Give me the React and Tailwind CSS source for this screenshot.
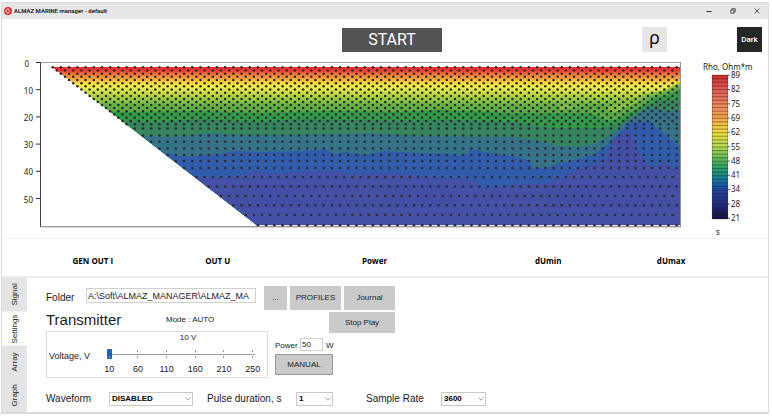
import { useState } from "react";

const LATTICE = 4.105;

// depth rows of the section: y position and index of the first measured point
const ROWS = [
  [67.3, 0], [70.5, 1], [73.7, 2], [76.8, 3], [80, 4], [83.2, 5], [86.3, 6], [89.5, 7],
  [92.8, 8], [96, 9], [99, 10], [102, 11], [105, 12], [108, 13], [111.3, 14], [114.5, 15],
  [117.8, 16], [121, 17], [124.3, 18], [128.5, 20], [135.5, 22], [141.7, 24], [148.5, 26],
  [155, 28], [161, 30], [168, 32], [177, 35], [186.5, 38], [196, 41], [205.3, 44],
  [215, 47], [225.3, 50],
];

const POINTS = ROWS.flatMap(([y, start]) => {
  const row = [];
  for (let n = start; n <= 152; n += 2) row.push([52.7 + n * LATTICE, y]);
  return row;
});

const LAYERS = [
  {
    fill: "#339a48",
    top: "40,112 100,111 130,112 200,111 260,113 330,111 400,112 440,110 512,113 590,113 598,116 608,121 618,119 628,113 640,107 655,98 668,95 680,89",
  },
  {
    fill: "#36855e",
    top: "40,121 100,121 160,122 200,119 256,122 300,119 400,121 450,120 512,122 545,127 560,128 600,128 620,123 635,113 650,104 665,100 680,101",
  },
  {
    fill: "#35738a",
    top: "40,135 140,135 165,137 185,136 200,134 215,133 240,135 270,135 330,134 370,133 400,135 430,136 512,137 530,139 548,143 556,146 580,146 595,144 605,138 615,131 625,123 640,113 652,108 666,111 680,110",
  },
  {
    fill: "#315bab",
    top: "40,153 165,153 180,156 190,157 200,155 215,155 235,151 260,152 300,151 323,150 325,148 329,152 335,154 345,152 365,155 385,151 420,153 453,154 454,156 468,154 470,149 485,152 512,156 525,159 530,162 533,168 545,168 560,163 580,159 596,153 606,146 615,137 625,127 633,122 650,121 655,127 665,134 680,147",
  },
  {
    fill: "#4350a5",
    top: "40,177 205,178 230,178 245,174 256,171 270,174 300,172 335,171 350,174 380,174 400,174 440,178 475,180 480,188 505,187 520,184 545,184 560,178 580,169 600,162 608,155 613,140 620,136 630,130 636,142 640,154 648,164 655,167 665,162 672,168 680,170",
  },
];

const DEPTH_TICKS = [
  [0, 62.5], [10, 89.7], [20, 116.9], [30, 144.1], [40, 171.3], [50, 198.5],
];

const RHO_TICKS = [89, 82, 75, 69, 62, 55, 48, 41, 34, 28, 21];

const VOLTAGE_TICKS = [10, 60, 110, 160, 210, 250];

const TABS = ["Signal", "Settings", "Array", "Graph"];

const grayButton = "bg-[#cacaca] text-[8px] text-[#222] flex items-center justify-center";

function TitleBar() {
  return (
    <header className="flex h-4 items-center gap-[2px] bg-[#e7e7e7] pr-2 pl-[2px]">
      <svg className="h-2 w-2" viewBox="0 0 8 8" aria-hidden="true">
        <circle cx="4" cy="4" r="3.9" fill="#e3202c" />
        <path d="M5.4 2.4A2.1 2.1 0 1 0 5.4 5.6" fill="none" stroke="#fff" strokeWidth="0.9" />
        <path d="M3.8 4h2.6" stroke="#fff" strokeWidth="0.7" />
      </svg>
      <h1 className="flex-1 font-[Roboto,sans-serif] text-[6px] leading-none font-medium text-black">
        ALMAZ MARINE manager - default
      </h1>
      <div className="flex items-center gap-[18px] text-[#333]">
        <button aria-label="Minimize">
          <svg className="h-[6px] w-[6px]" viewBox="0 0 6 6">
            <path d="M0.5 3.5h5" stroke="currentColor" />
          </svg>
        </button>
        <button aria-label="Restore">
          <svg className="h-[6px] w-[6px]" viewBox="0 0 6 6" fill="none" stroke="currentColor" strokeWidth="0.8">
            <path d="M0.8 1.9h3.2v3.3h-3.2zM1.9 1.9v-1.2h3.3v3.3h-1.2" />
          </svg>
        </button>
        <button aria-label="Close">
          <svg className="h-[6px] w-[6px]" viewBox="0 0 6 6">
            <path d="M0.6 0.6l4.8 4.8M5.4 0.6l-4.8 4.8" stroke="currentColor" strokeWidth="0.8" />
          </svg>
        </button>
      </div>
    </header>
  );
}

function Toolbar() {
  return (
    <div className="flex items-start pt-2 pr-[6px] pb-1">
      <div className="flex-[17]" />
      <button className="mt-px h-6 w-[100px] bg-[#525353] font-[Roboto,sans-serif] text-[16px] leading-6 text-white">
        START
      </button>
      <div className="flex-[10]" />
      <button className="h-[25px] w-[25px] bg-[#e6e6e6] pb-[5px] font-['Open_Sans',sans-serif] text-[18px] leading-5 text-black">
        ρ
      </button>
      <button className="ml-[70px] h-[25px] w-[25px] bg-[#262626] font-[Roboto,sans-serif] text-[8px] font-medium text-white">
        Dark
      </button>
    </div>
  );
}

function Section() {
  return (
    <svg className="min-w-0 flex-1" viewBox="2 56 688 182" role="img" aria-label="Resistivity section">
      <defs>
        <linearGradient id="section-fill" gradientUnits="userSpaceOnUse" x1="0" y1="67" x2="0" y2="113">
          <stop offset="0" stopColor="#ee2a2e" />
          <stop offset="0.08" stopColor="#f03a30" />
          <stop offset="0.14" stopColor="#f36c37" />
          <stop offset="0.22" stopColor="#f7943b" />
          <stop offset="0.3" stopColor="#fcc03d" />
          <stop offset="0.37" stopColor="#f8e63f" />
          <stop offset="0.45" stopColor="#e9ec49" />
          <stop offset="0.55" stopColor="#cfe045" />
          <stop offset="0.64" stopColor="#abd03f" />
          <stop offset="0.74" stopColor="#8ac540" />
          <stop offset="0.82" stopColor="#67b445" />
          <stop offset="1" stopColor="#57a947" />
        </linearGradient>
        <clipPath id="section-clip">
          <path d="M52 67H680V226H258z" />
        </clipPath>
      </defs>
      <g clipPath="url(#section-clip)">
        <rect x="50" y="67" width="630" height="160" fill="url(#section-fill)" />
        <path d="M560,104L600,110L620,103L645,94L665,90L680,82V120H560z" fill="#84c241" />
        <path d="M560,110L598,104L604,107L612,113L630,106L650,96L665,92L680,86V126H560z" fill="#5bab46" />
        {LAYERS.map((layer) => (
          <polygon key={layer.fill} points={`${layer.top} 680,228 40,228`} fill={layer.fill} />
        ))}
        <path d="M255 225.5H680" stroke="#e4e4f4" />
      </g>
      <path d="M40 62.5H680.5" stroke="#9aa3ad" />
      <path d="M680.5 62V227" stroke="#8e9297" />
      <path d="M40.5 62V227" stroke="#444" />
      <path d="M40 226.8H681" stroke="#7b7672" />
      {POINTS.map(([x, y]) => (
        <circle key={`${x}-${y}`} cx={x} cy={y} r="1.3" fill="#2c2a30" />
      ))}
      <g className="font-['Noto_Sans',sans-serif] text-[8px]" fill="#222" textAnchor="end">
        {DEPTH_TICKS.map(([depth, y]) => (
          <g key={depth}>
            <path d={`M36 ${y}H40`} stroke="#333" />
            <text x={depth === 0 ? 29 : 33} y={y + 4}>
              {depth}
            </text>
          </g>
        ))}
      </g>
    </svg>
  );
}

function Legend() {
  return (
    <svg className="w-[78px] shrink-0" viewBox="690 56 78 182" role="img" aria-label="Resistivity scale">
      <defs>
        <linearGradient id="rho-scale" x1="0" y1="0" x2="0" y2="1">
          <stop offset="0" stopColor="#cf2b2c" />
          <stop offset="0.1" stopColor="#e35a54" />
          <stop offset="0.2" stopColor="#ef835c" />
          <stop offset="0.3" stopColor="#f4a648" />
          <stop offset="0.4" stopColor="#f2de40" />
          <stop offset="0.5" stopColor="#b3d94f" />
          <stop offset="0.6" stopColor="#4db457" />
          <stop offset="0.69" stopColor="#168c80" />
          <stop offset="0.75" stopColor="#1268a8" />
          <stop offset="0.8" stopColor="#1f43a0" />
          <stop offset="0.9" stopColor="#232a80" />
          <stop offset="1" stopColor="#131140" />
        </linearGradient>
      </defs>
      <rect x="712" y="75" width="16" height="144" fill="url(#rho-scale)" />
      {Array.from({ length: 41 }, (_, i) => (
        <path key={i} d={`M712 ${75.2 + i * 3.59}H728`} stroke="#1c1c1c" strokeOpacity="0.6" strokeWidth="0.7" />
      ))}
      <path d="M712.3 75V219M727.7 75V219" stroke="#333" strokeOpacity="0.6" strokeWidth="0.6" />
      <g className="font-['Noto_Sans',sans-serif] text-[8px]" fill="#222">
        <text x="703" y="70">
          Rho, Ohm*m
        </text>
        {RHO_TICKS.map((value, i) => (
          <g key={value}>
            <path d={`M728 ${75.2 + i * 14.3}h2`} stroke="#444" strokeWidth="0.8" />
            <text x="731" y={78 + i * 14.3}>
              {value}
            </text>
          </g>
        ))}
        <text x="716" y="235">
          s
        </text>
      </g>
    </svg>
  );
}

function Readings() {
  return (
    <div className="grid h-[38px] grid-cols-[124fr_126fr_188fr_160fr_86fr] items-center border-t border-[#f4f4f4] pt-[6px] pr-[54px] pl-[29px] text-center font-['Open_Sans',sans-serif] text-[8px] font-bold text-black">
      <span>GEN OUT I</span>
      <span>OUT U</span>
      <span>Power</span>
      <span>dUmin</span>
      <span>dUmax</span>
    </div>
  );
}

function Select({ id, options, className }) {
  return (
    <div className={`relative ${className}`}>
      <select
        id={id}
        className="block h-[14px] w-full appearance-none border border-[#c9c9c9] bg-white pl-[2px] text-[8px] leading-3 font-bold text-black"
      >
        {options.map((option) => (
          <option key={option}>{option}</option>
        ))}
      </select>
      <svg
        className="pointer-events-none absolute top-[5px] right-[2px] h-[4px] w-[6px]"
        viewBox="0 0 6 4"
        fill="none"
        stroke="#888"
        strokeWidth="0.8"
      >
        <path d="M0.4 0.6L3 3.2L5.6 0.6" />
      </svg>
    </div>
  );
}

function TickRow() {
  return (
    <div className="grid grid-cols-6 justify-items-center">
      {VOLTAGE_TICKS.map((value) => (
        <span key={value} className="h-[2px] w-px bg-[#999]" />
      ))}
    </div>
  );
}

function VoltageBox() {
  const [voltage, setVoltage] = useState(10);

  return (
    <div className="flex h-[47px] border border-[#dcdcdc]">
      <label htmlFor="voltage" className="w-12 shrink-0 pt-[18px] pl-[2px] text-[9px] leading-3 whitespace-nowrap">
        Voltage, V
      </label>
      <div className="flex-1">
        <output htmlFor="voltage" className="block pl-[14px] text-center text-[8px] leading-3">
          {voltage} V
        </output>
        <div className="pt-[6px]">
          <TickRow />
          <input
            id="voltage"
            type="range"
            min="10"
            max="250"
            value={voltage}
            onChange={(e) => setVoltage(Number(e.target.value))}
            className="mx-auto -my-[3px] block h-[10px] w-[148px] appearance-none bg-[linear-gradient(#9a9a9a,#9a9a9a)] bg-[length:100%_1px] bg-center bg-no-repeat [&::-webkit-slider-thumb]:h-[10px] [&::-webkit-slider-thumb]:w-[5px] [&::-webkit-slider-thumb]:appearance-none [&::-webkit-slider-thumb]:rounded-[1px] [&::-webkit-slider-thumb]:bg-[#1f62b4]"
          />
          <TickRow />
        </div>
        <div className="grid grid-cols-6 pt-[5px] text-center text-[9px] leading-3">
          {VOLTAGE_TICKS.map((value) => (
            <span key={value}>{value}</span>
          ))}
        </div>
      </div>
    </div>
  );
}

function SettingsPanel() {
  return (
    <div className="flex-1 pt-2 pb-[6px] pl-[19px]">
      <div className="flex h-6">
        <label htmlFor="folder" className="w-10 pt-[6px] text-[10px] leading-3">
          Folder
        </label>
        <input
          id="folder"
          defaultValue="A:\Soft\ALMAZ_MANAGER\ALMAZ_MA"
          className="mt-[2px] h-[15px] w-[170px] border border-[#d0d0d0] px-px text-[9px] leading-3"
        />
        <button className={`${grayButton} ml-2 w-[23px]`}>...</button>
        <button className={`${grayButton} ml-[3px] w-[51px]`}>PROFILES</button>
        <button className={`${grayButton} ml-[3px] w-[51px]`}>Journal</button>
      </div>

      <div className="mt-[2px] flex gap-[7px]">
        <div className="w-[222px]">
          <div className="flex h-[19px] items-center">
            <h2 className="w-[120px] pb-[4px] text-[15px] leading-4">Transmitter</h2>
            <span className="pb-[4px] text-[8px] leading-4">Mode : AUTO</span>
          </div>
          <VoltageBox />
        </div>
        <div className="flex w-[120px] flex-col">
          <button className={`${grayButton} h-[21px] w-[66px] self-end`}>Stop Play</button>
          <div className="mt-[5px] flex h-[13px] items-end text-[8px] leading-[10px]">
            <label htmlFor="power" className="w-[25px]">
              Power
            </label>
            <input
              id="power"
              defaultValue="50"
              className="h-[13px] w-[23px] border border-[#d0d0d0] px-px leading-[10px]"
            />
            <span className="ml-[3px]">W</span>
          </div>
          <button className={`${grayButton} mt-[3px] h-[21px] w-[58px] border border-[#999]`}>MANUAL</button>
        </div>
      </div>

      <div className="mt-[14px] flex items-center text-[10px] leading-[14px]">
        <label htmlFor="waveform" className="w-[63px]">
          Waveform
        </label>
        <Select id="waveform" options={["DISABLED"]} className="w-[84px]" />
        <label htmlFor="pulse" className="ml-[14px] w-[89px]">
          Pulse duration, s
        </label>
        <Select id="pulse" options={["1"]} className="w-[37px]" />
        <label htmlFor="rate" className="ml-[33px] w-[75px]">
          Sample Rate
        </label>
        <Select id="rate" options={["3600"]} className="w-[45px]" />
      </div>
    </div>
  );
}

export default function App() {
  const [tab, setTab] = useState("Settings");

  return (
    <div className="bg-white pt-[2px] pr-[3px] pl-px font-['Liberation_Sans',Arial,sans-serif] text-[#1a1a1a]">
      <div className="border-x border-t border-b-2 border-[#dadada]">
        <TitleBar />
        <Toolbar />
        <div className="flex items-start">
          <Section />
          <Legend />
        </div>
        <Readings />
        <main className="flex border-t-2 border-[#ededed]">
          <nav role="tablist" className="grid w-[25px] grid-rows-4 bg-[#e4e4e4]">
            {TABS.map((name) => (
              <button
                key={name}
                role="tab"
                aria-selected={name === tab}
                onClick={() => setTab(name)}
                className={`flex rotate-180 items-center justify-center text-[8px] [writing-mode:vertical-rl] ${
                  name === tab ? "bg-white" : ""
                }`}
              >
                {name}
              </button>
            ))}
          </nav>
          <SettingsPanel />
        </main>
      </div>
    </div>
  );
}
